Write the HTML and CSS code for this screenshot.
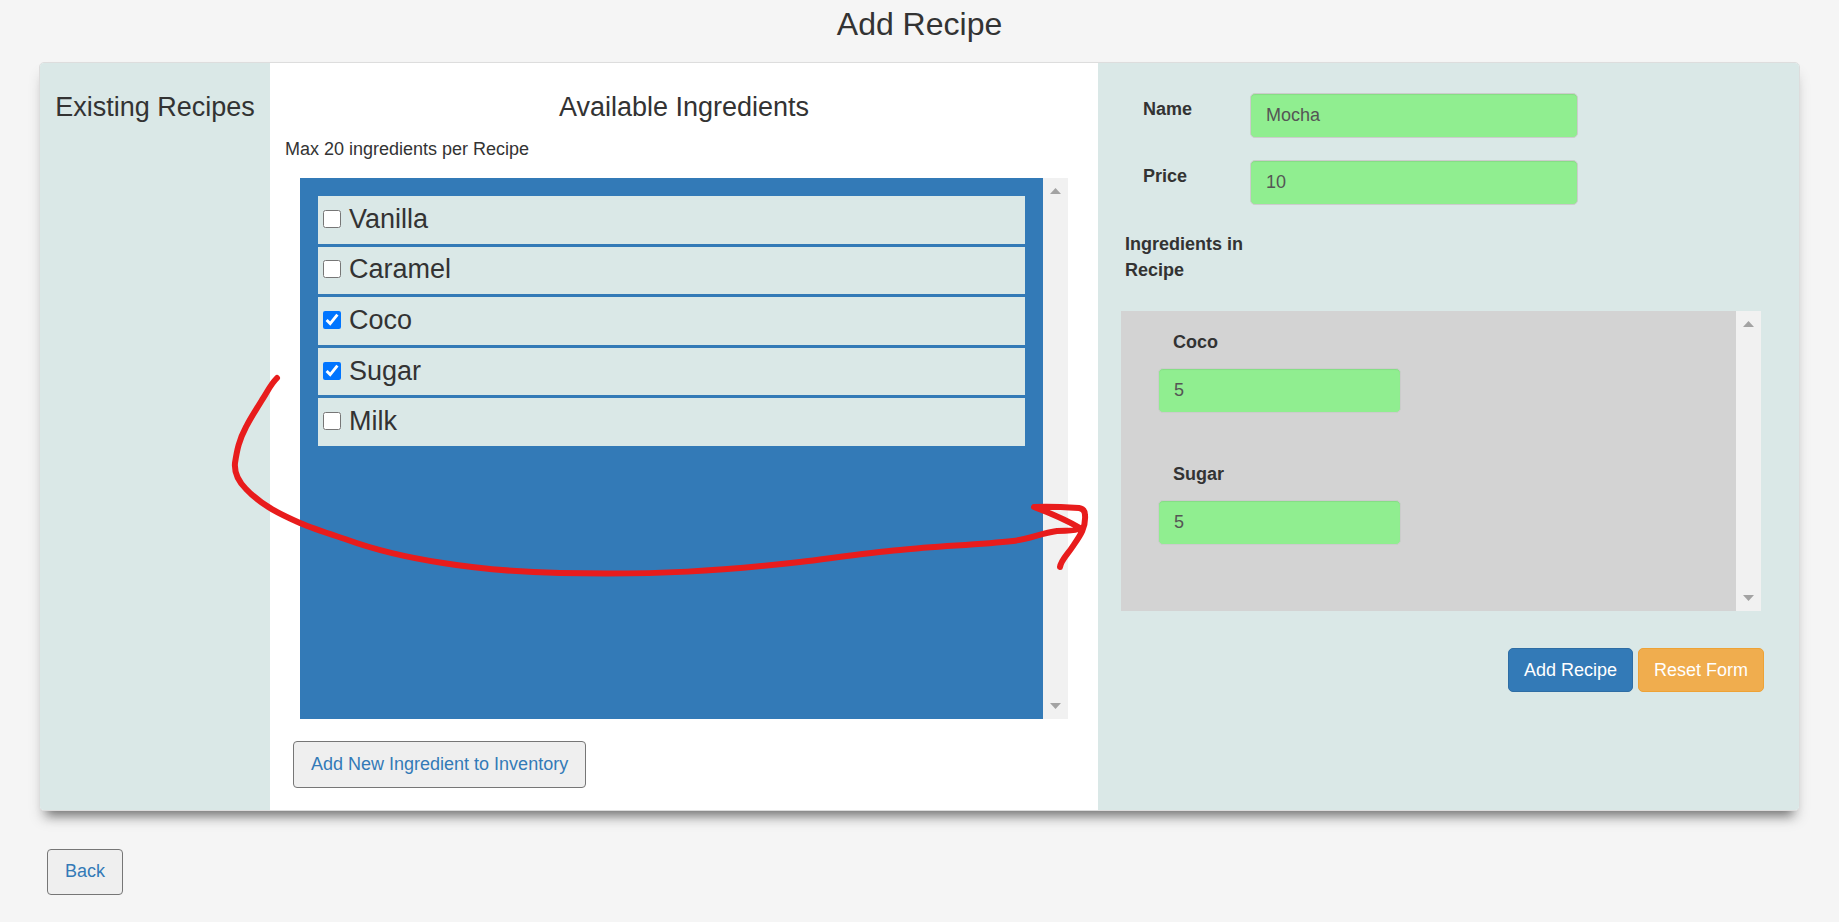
FILE: index.html
```html
<!DOCTYPE html>
<html lang="en">
<head>
<meta charset="utf-8">
<title>Add Recipe</title>
<link rel="stylesheet" href="styles.css">
</head>
<body>
<h1 class="page-title">Add Recipe</h1>

<main class="panel">
  <section class="existing">
    <h2 class="heading">Existing Recipes</h2>
  </section>

  <section class="available">
    <h2 class="heading">Available Ingredients</h2>
    <p class="note">Max 20 ingredients per Recipe</p>
    <div class="pane pane-inventory">
      <ul class="ingredients">
        <li><label class="ingredient"><input class="tick" type="checkbox">Vanilla</label></li>
        <li><label class="ingredient"><input class="tick" type="checkbox">Caramel</label></li>
        <li><label class="ingredient"><input class="tick" type="checkbox" checked>Coco</label></li>
        <li><label class="ingredient"><input class="tick" type="checkbox" checked>Sugar</label></li>
        <li><label class="ingredient"><input class="tick" type="checkbox">Milk</label></li>
      </ul>
      <div class="track" aria-hidden="true">
        <svg class="track-arrow" viewBox="0 0 11 6"><path d="M0 6 5.500 0 11 6Z"/></svg>
        <svg class="track-arrow" viewBox="0 0 11 6"><path d="M0 0H11L5.500 6Z"/></svg>
      </div>
    </div>
    <button class="plain-button add-ingredient" type="button">Add New Ingredient to Inventory</button>
  </section>

  <form class="recipe">
    <div class="fields">
      <div class="field">
        <label class="field-label" for="name">Name</label>
        <input class="text-input" id="name" type="text" value="Mocha">
      </div>
      <div class="field">
        <label class="field-label" for="price">Price</label>
        <input class="text-input" id="price" type="text" value="10">
      </div>
    </div>
    <h3 class="chosen-title">Ingredients in Recipe</h3>
    <div class="pane pane-chosen">
      <div class="amounts">
        <div class="amount">
          <label class="amount-label" for="coco">Coco</label>
          <input class="text-input" id="coco" type="text" value="5">
        </div>
        <div class="amount">
          <label class="amount-label" for="sugar">Sugar</label>
          <input class="text-input" id="sugar" type="text" value="5">
        </div>
      </div>
      <div class="track" aria-hidden="true">
        <svg class="track-arrow" viewBox="0 0 11 6"><path d="M0 6 5.500 0 11 6Z"/></svg>
        <svg class="track-arrow" viewBox="0 0 11 6"><path d="M0 0H11L5.500 6Z"/></svg>
      </div>
    </div>
    <div class="actions">
      <button class="button button-primary" type="submit">Add Recipe</button>
      <button class="button button-warning" type="reset">Reset Form</button>
    </div>
  </form>
</main>

<button class="plain-button back" type="button">Back</button>

<svg class="pointer" width="900" height="220" viewBox="220 370 900 220" aria-hidden="true">
  <path d="M277 378C270 385 268 391 262 400C256 410 251 417 246 427C239 440 237 450 235 463C234 474 240 483 246 489C262 506 282 515 300 523C314 529 330 534 345 539C375 550 410 558 443 563C480 569 520 572 560 573C660 575 720 571 800 562C833 558 866 553 900 550C938 546 977 545 1013 541C1030 539 1041 533 1057 531C1065 530 1075 532 1080 528C1066 520 1050 513 1034 507C1049 506 1064 507 1079 508Q1085 509 1085 515C1086 528 1080 536 1073 546C1068 554 1061 560 1060 567"/>
</svg>
</body>
</html>
```
FILE: styles.css
```css
* {
  box-sizing: border-box;
}

body {
  margin: 0;
  position: relative;
  background: #f5f5f5;
  color: #333;
  font: 18px/26px "Liberation Sans", Arial, sans-serif;
}

button,
input {
  font: inherit;
}

.page-title {
  margin: 0 0 14px;
  font-size: 32px;
  line-height: 48px;
  font-weight: 400;
  text-align: center;
}

.panel {
  display: grid;
  grid-template-columns: 230fr 828fr 701fr;
  margin: 0 39px;
  border: 1px solid #ddd;
  border-radius: 5px;
  background: #fff;
  box-shadow: 0 12px 10px -8px rgba(0, 0, 0, .45), 0 10px 14px -2px rgba(0, 0, 0, .15);
}

.existing {
  padding-top: 29px;
  background: #dae8e7;
  border-radius: 4px 0 0 4px;
}

.heading {
  margin: 0 0 14px;
  font-size: 27px;
  line-height: 30px;
  font-weight: 400;
  text-align: center;
}

.available {
  padding: 29px 30px 22px;
}

.note {
  margin: 0 0 16px -15px;
}

.pane {
  display: flex;
}

.pane-inventory {
  height: 541px;
  background: #337ab7;
}

.ingredients {
  flex: 1;
  display: grid;
  grid-auto-rows: 1fr;
  gap: 3px;
  height: 250px;
  margin: 18px;
  padding: 0;
  list-style: none;
}

.ingredient {
  display: flex;
  align-items: center;
  gap: 8px;
  height: 100%;
  padding: 0 5px 2px;
  background: #dae8e7;
  font-size: 27px;
}

.tick {
  width: 18px;
  height: 18px;
  margin: 0;
  accent-color: #0075ff;
}

.track {
  flex: none;
  width: 25px;
  display: flex;
  flex-direction: column;
  justify-content: space-between;
  align-items: center;
  padding: 10px 0;
  background: #f1f1f1;
}

.track-arrow {
  width: 11px;
  height: 6px;
  fill: #a3a3a3;
}

.plain-button {
  display: block;
  padding: 0 17px 2px;
  border: 1px solid #767676;
  border-radius: 4px;
  background: #efefef;
  color: #337ab7;
}

.add-ingredient {
  height: 47px;
  margin: 22px 0 0 -7px;
}

.back {
  height: 46px;
  margin: 38px 0 0 47px;
}

.recipe {
  padding: 30px 38px 0 23px;
  background: #dae8e7;
  border-radius: 0 4px 4px 0;
}

.fields {
  display: grid;
  gap: 22px;
  padding-left: 22px;
}

.field {
  display: flex;
}

.field-label {
  flex: none;
  width: 107px;
  padding-top: 3px;
  font-weight: 700;
}

.text-input {
  flex: 0 1 328px;
  min-width: 0;
  height: 45px;
  padding: 0 15px;
  border: 1px solid #ccc;
  border-radius: 5px;
  background: #90ee90;
  box-shadow: inset 0 1px 1px rgba(0, 0, 0, .075);
  color: #555;
}

.chosen-title {
  width: 122px;
  margin: 26px 0 28px 4px;
  font-size: 18px;
  line-height: 26px;
  font-weight: 700;
}

.pane-chosen {
  height: 300px;
  background: #d3d3d3;
}

.amounts {
  flex: 1;
  display: flex;
  flex-direction: column;
  gap: 48px;
  padding: 18px 37px;
}

.amount {
  display: flex;
  flex-direction: column;
  align-items: flex-start;
  gap: 13px;
}

.amount-label {
  padding-left: 15px;
  font-weight: 700;
}

.amount .text-input {
  flex: none;
  width: 243px;
}

.actions {
  display: flex;
  justify-content: flex-end;
  gap: 5px;
  margin: 37px -3px 0 0;
}

.button {
  height: 44px;
  padding: 0 15px;
  border: 1px solid;
  border-radius: 5px;
  color: #fff;
}

.button-primary {
  border-color: #2e6da4;
  background: #337ab7;
}

.button-warning {
  border-color: #eea236;
  background: #f0ad4e;
}

.pointer {
  position: absolute;
  left: 220px;
  top: 370px;
  fill: none;
  stroke: #e81c1c;
  stroke-width: 6;
  stroke-linecap: round;
  stroke-linejoin: round;
  pointer-events: none;
}
```
